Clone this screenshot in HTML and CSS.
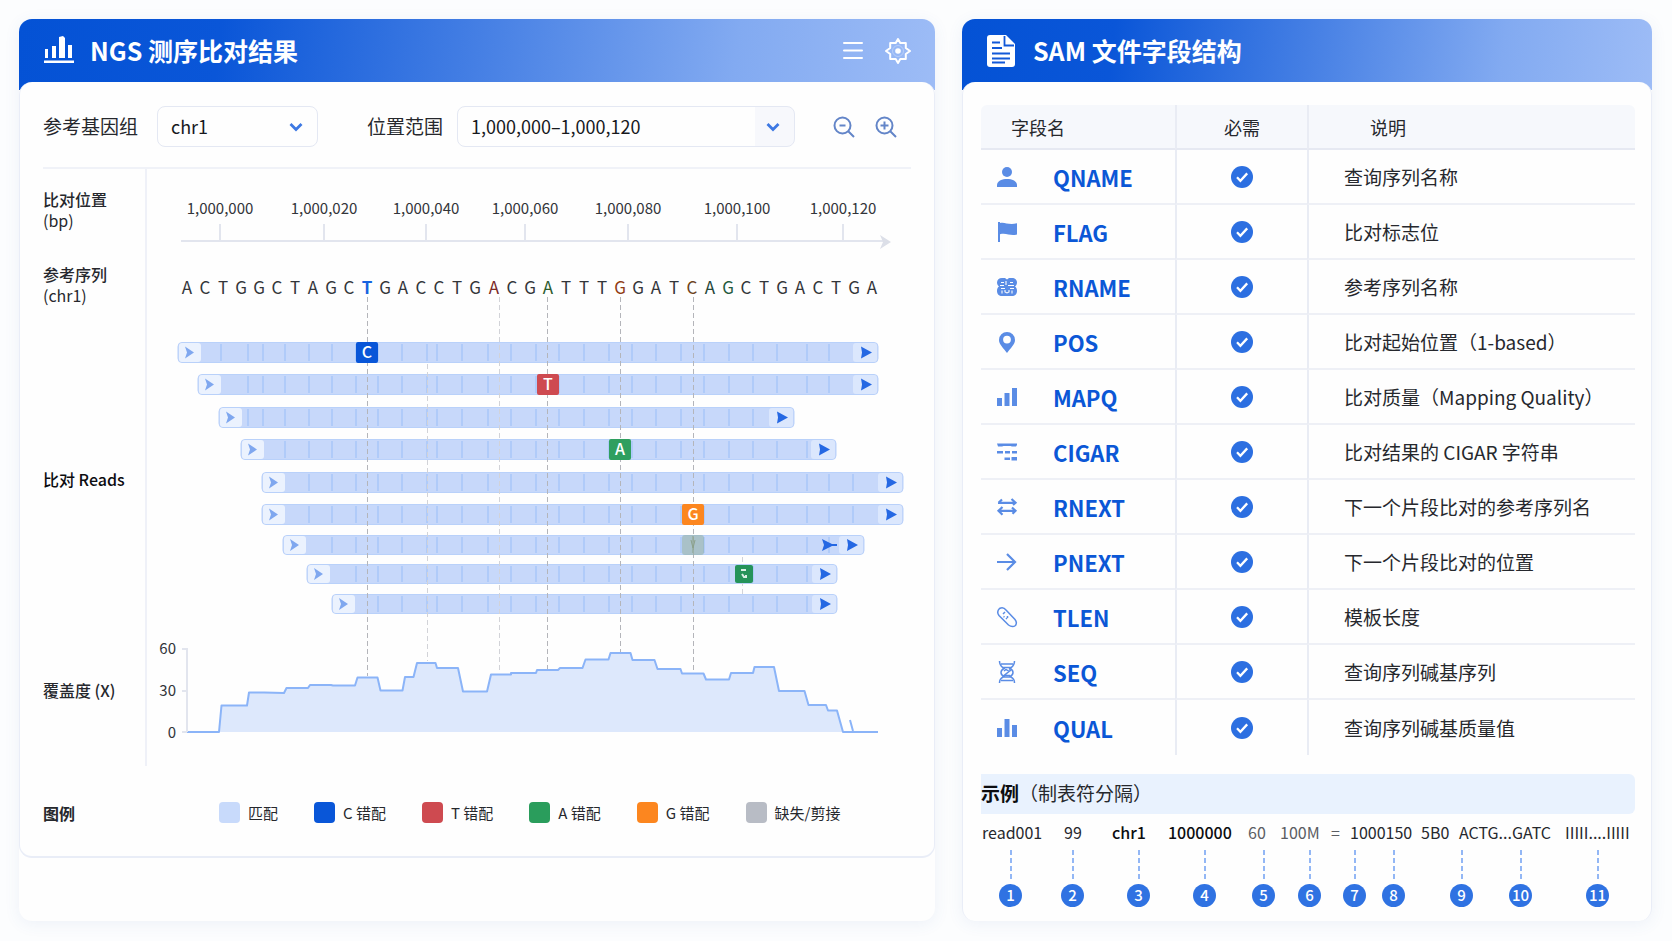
FILE: index.html
```html
<!DOCTYPE html>
<html lang="zh-CN">
<head>
    <meta charset="UTF-8">
    <meta name="viewport" content="width=device-width, initial-scale=1.0">
    <title>NGS 测序比对结果</title>
    <link rel="stylesheet" href="styles.css">
</head>
<body>
    <svg class="sprite" aria-hidden="true">
        <symbol id="check" viewBox="0 0 22 22">
            <circle cx="11" cy="11" r="11" fill="#2c6fe1"/>
            <path d="M6 11.3l3.4 3.5 6.8-7.4" fill="none" stroke="#fff" stroke-width="2.3"/>
        </symbol>
        <symbol id="chevron" viewBox="0 0 14 10">
            <path d="M1.5 2l5.500 5.500L12.500 2" fill="none" stroke="#3d78e3" stroke-width="2.800"/>
        </symbol>
    </svg>

    <main class="page">
        <section class="panel">
            <header class="panel-head">
                <svg class="head-icon" width="30" height="30" viewBox="0 0 30 30" fill="#fff">
                    <path d="M1 13h3v9H1zM8 10h4v12H8zM15 1l4-1 2 2v20h-6zM24 9h4v13h-4zM0 24.500h30v2.500H0z"/>
                </svg>
                <h1>NGS 测序比对结果</h1>
                <div class="head-actions">
                    <button type="button" aria-label="菜单">
                        <svg width="24" height="24" viewBox="0 0 24 24" fill="none" stroke="#fff" stroke-width="2" stroke-linecap="round">
                            <path d="M3 4h18M3 11.500h18M3 19h18"/>
                        </svg>
                    </button>
                    <button type="button" aria-label="设置">
                        <svg width="26" height="26" viewBox="0 0 26 26" fill="none" stroke="#fff" stroke-width="2" stroke-linejoin="round">
                            <path d="M13 1l2.300 4h5.500v5L25 13l-4.200 3v5h-5.500L13 25l-2.300-4H5.200v-5L1 13l4.200-3V5h5.500z"/>
                            <circle cx="13" cy="13" r="5.500" stroke-width="1" stroke-opacity=".3"/>
                            <circle cx="13" cy="13" r="2.800" fill="#fff" stroke="none"/>
                        </svg>
                    </button>
                </div>
            </header>

            <div class="panel-body viewer">
                <form class="controls">
                    <label for="genome">参考基因组</label>
                    <div class="select genome">
                        <select id="genome"><option>chr1</option></select>
                        <svg class="chevron" width="14" height="10"><use href="#chevron"/></svg>
                    </div>
                    <label class="range-label" for="range">位置范围</label>
                    <div class="select range">
                        <select id="range"><option>1,000,000–1,000,120</option></select>
                        <svg class="chevron" width="14" height="10"><use href="#chevron"/></svg>
                    </div>
                    <div class="zoom">
                        <button type="button" aria-label="缩小">
                            <svg width="22" height="22" viewBox="0 0 22 22" fill="none" stroke="#6385c8" stroke-width="2">
                                <circle cx="9.500" cy="9.500" r="8"/><path d="M6.500 9.500h6M15 15l6 6"/>
                            </svg>
                        </button>
                        <button type="button" aria-label="放大">
                            <svg width="22" height="22" viewBox="0 0 22 22" fill="none" stroke="#6385c8" stroke-width="2">
                                <circle cx="9.500" cy="9.500" r="8"/><path d="M5.500 9.500h8M9.500 5.500v8M15 15l6 6"/>
                            </svg>
                        </button>
                    </div>
                </form>

                <div class="tracks">
                    <div class="track-labels">
                        <div>比对位置<span>(bp)</span></div>
                        <div>参考序列<span>(chr1)</span></div>
                        <div class="strong">比对 Reads</div>
                        <div>覆盖度 (X)</div>
                    </div>
                    <svg id="plot" class="plot" viewBox="147 169 764 597" role="img" aria-label="比对 Reads"></svg>
                </div>

                <div class="legend">
                    <h2>图例</h2>
                    <ul>
                        <li><i class="swatch match"></i>匹配</li>
                        <li><i class="swatch base-c"></i>C 错配</li>
                        <li><i class="swatch base-t"></i>T 错配</li>
                        <li><i class="swatch base-a"></i>A 错配</li>
                        <li><i class="swatch base-g"></i>G 错配</li>
                        <li><i class="swatch gap"></i>缺失/剪接</li>
                    </ul>
                </div>
            </div>
        </section>

        <section class="panel">
            <header class="panel-head sam-head">
                <svg class="head-icon" width="28" height="32" viewBox="0 0 28 32">
                    <path d="M3 0h16l9 9v20a3 3 0 0 1-3 3H3a3 3 0 0 1-3-3V3a3 3 0 0 1 3-3z" fill="#fff"/>
                    <path d="M17.500 1v9.500H27M5 7.500h8M5 13h10M5 18.500h18M5 23.500h18M5 27.500h13" fill="none" stroke="#1259d8" stroke-width="1.800"/>
                </svg>
                <h1>SAM 文件字段结构</h1>
            </header>

            <div class="panel-body sam">
                <table class="fields">
                    <thead>
                        <tr><th class="col-name">字段名</th><th class="col-req">必需</th><th class="col-desc">说明</th></tr>
                    </thead>
                    <tbody>
                        <tr>
                            <td><div class="field">
                                <svg viewBox="0 0 20 20"><circle cx="10" cy="5" r="5"/><path d="M0 20v-2.500C1 13.500 5 12 10 12s9 1.500 10 5.500V20z"/></svg>
                                QNAME</div></td>
                            <td><svg class="check" role="img" aria-label="是"><use href="#check"/></svg></td>
                            <td>查询序列名称</td>
                        </tr>
                        <tr>
                            <td><div class="field">
                                <svg viewBox="0 0 20 20"><path d="M1 0h2v1c5-1.500 8 2.500 17 .3v11.200c-7 2-10-2-17-.3V20H1z"/></svg>
                                FLAG</div></td>
                            <td><svg class="check" role="img" aria-label="是"><use href="#check"/></svg></td>
                            <td>比对标志位</td>
                        </tr>
                        <tr>
                            <td><div class="field">
                                <svg viewBox="0 0 20 20"><path d="M5 1h3l2 1.500L12 1h3c3 0 5 2 5 4.500 0 2-1 3-2 4 1.500 1 2 2.500 2 4.500 0 3-2 5-5 5H5c-3 0-5-2-5-5 0-2 .5-3.500 2-4.500-1-1-2-2-2-4C0 3 2 1 5 1z"/><path class="cut" d="M4 5.500h3M9 4v4M13 5.500h3M3 8.500h4M11 8.500h6M4 11.500h4M13 11.500h4M5 13.500v3M8 13v2l2 1 2-1v-2M15 13.500v3"/></svg>
                                RNAME</div></td>
                            <td><svg class="check" role="img" aria-label="是"><use href="#check"/></svg></td>
                            <td>参考序列名称</td>
                        </tr>
                        <tr>
                            <td><div class="field">
                                <svg viewBox="0 0 20 20"><path fill-rule="evenodd" d="M10 0a8 8 0 0 1 8 8c0 4.500-4.500 8-8 13-3.500-5-8-8.500-8-13a8 8 0 0 1 8-8zm0 3.700a3.900 3.900 0 1 0 0 7.800 3.900 3.900 0 0 0 0-7.800z"/></svg>
                                POS</div></td>
                            <td><svg class="check" role="img" aria-label="是"><use href="#check"/></svg></td>
                            <td>比对起始位置（1-based）</td>
                        </tr>
                        <tr>
                            <td><div class="field">
                                <svg viewBox="0 0 20 20"><path d="M0 11h5v8H0zM7.500 6h5v13h-5zM15 1h5v18h-5z"/></svg>
                                MAPQ</div></td>
                            <td><svg class="check" role="img" aria-label="是"><use href="#check"/></svg></td>
                            <td>比对质量（Mapping Quality）</td>
                        </tr>
                        <tr>
                            <td><div class="field">
                                <svg viewBox="0 0 20 20"><path d="M0 1.500h20V3l-1 1.500h-4L13.500 4h-7L5 4.500H1zM0 9h6v2.500H0zM8 9h5v2.500H8zM15 9h5v2.500h-5zM7.500 15.500H13V18H7.500zM14.500 15H20v3.500h-5.500z"/></svg>
                                CIGAR</div></td>
                            <td><svg class="check" role="img" aria-label="是"><use href="#check"/></svg></td>
                            <td>比对结果的 CIGAR 字符串</td>
                        </tr>
                        <tr>
                            <td><div class="field">
                                <svg viewBox="0 0 20 20"><path class="line" d="M1 5.800h18M14.500 2l4 3.800-2.500 2M5 2.500L1.500 5.800M1 13.800h18M5.500 10l-4 3.800 4 4M15 10.500l3.500 3.300-3 3"/></svg>
                                RNEXT</div></td>
                            <td><svg class="check" role="img" aria-label="是"><use href="#check"/></svg></td>
                            <td>下一个片段比对的参考序列名</td>
                        </tr>
                        <tr>
                            <td><div class="field">
                                <svg viewBox="0 0 20 20"><path class="line" d="M0 10h18M10 2l8 8-8 8"/></svg>
                                PNEXT</div></td>
                            <td><svg class="check" role="img" aria-label="是"><use href="#check"/></svg></td>
                            <td>下一个片段比对的位置</td>
                        </tr>
                        <tr>
                            <td><div class="field">
                                <svg viewBox="0 0 20 20"><path class="line thin" d="M2.500 1.500c2.500-1.500 5-.5 6.500 1.500l9 9.500c2 2.500 1.500 4.500.5 6-2 1.500-5 1-7-.5L2 8.500C.5 6.500.5 3.500 2.500 1.500zM6 7l2-2M9 12l1-1"/><path class="line thin" d="M6.500 9.500l1 .5M10.500 9v2"/></svg>
                                TLEN</div></td>
                            <td><svg class="check" role="img" aria-label="是"><use href="#check"/></svg></td>
                            <td>模板长度</td>
                        </tr>
                        <tr>
                            <td><div class="field">
                                <svg viewBox="0 0 20 20"><path class="line thin" d="M2.500-1c0 5 2 5.500 4.500 7.500-4 2-4 6 0 8-2.500 1.500-4.500 2-4.500 6.500M17.500-1c0 5-2 5.500-4.500 7.500 4 2 4 6 0 8 2.500 1.500 4.500 2 4.500 6.500M4 2h12M6 5.500h8M6 15h8M4 18.500h12"/><path class="line thin" d="M7 9l2-1.500 3 2-5 4h6M12 7.500l2 1.500"/></svg>
                                SEQ</div></td>
                            <td><svg class="check" role="img" aria-label="是"><use href="#check"/></svg></td>
                            <td>查询序列碱基序列</td>
                        </tr>
                        <tr>
                            <td><div class="field">
                                <svg viewBox="0 0 20 20"><path d="M0 10h5v9H0zM7.500 1h5v18h-5zM15 7h5v12h-5z"/></svg>
                                QUAL</div></td>
                            <td><svg class="check" role="img" aria-label="是"><use href="#check"/></svg></td>
                            <td>查询序列碱基质量值</td>
                        </tr>
                    </tbody>
                </table>

                <h2 class="example-title"><b>示例</b>（制表符分隔）</h2>
                <div class="example-line">
                    <span>read001</span>
                    <span>99</span>
                    <span class="dark">chr1</span>
                    <span class="dark">1000000</span>
                    <span class="pale">60</span>
                    <span class="pale">100M</span>
                    <span class="pale">=</span>
                    <span>1000150</span>
                    <span>5B0</span>
                    <span>ACTG...GATC</span>
                    <span>IIIII....IIIII</span>
                </div>
                <ol class="markers">
                    <li>1</li><li>2</li><li>3</li><li>4</li><li>5</li><li>6</li>
                    <li>7</li><li>8</li><li>9</li><li>10</li><li>11</li>
                </ol>
            </div>
        </section>
    </main>

    <script src="plot.js"></script>
</body>
</html>
```

FILE: styles.css
```css
* {
    box-sizing: border-box;
}
body {
    margin: 0;
    background-color: #fcfdfe;
    color: #26282d;
    font-family: "Noto Sans CJK SC", "Noto Sans", sans-serif;
    font-size: 16px;
}
h1, h2, ul, ol {
    margin: 0;
    padding: 0;
    font-weight: 400;
}
ul, ol {
    list-style: none;
}
button {
    display: flex;
    padding: 0;
    border: none;
    background: none;
    cursor: pointer;
}
.sprite {
    display: none;
}
.page {
    display: grid;
    grid-template-columns: 916fr 690fr;
    gap: 27px;
    padding: 19px 20px 20px 19px;
}

/* panels */
.panel {
    border-radius: 13px;
    background: #fefefe linear-gradient(97deg, #0452d5 0%, #0a56d8 22%, #457fe4 50%, #82aaf1 78%, #9dbcf6 100%) no-repeat;
    background-size: 100% 71px;
    box-shadow: 0 3px 16px rgba(70, 100, 180, 0.08);
}
.panel-head {
    display: flex;
    align-items: center;
    gap: 16px;
    height: 63px;
    padding: 0 24px 0 25px;
    color: #fff;
}
.sam-head {
    gap: 18px;
}
.panel-head h1 {
    padding-bottom: 2px;
    font-size: 25px;
    line-height: 32px;
    font-weight: 700;
}
.head-actions {
    display: flex;
    align-items: center;
    gap: 20px;
    margin-left: auto;
}
.panel-body {
    border: 1px solid #e9edf7;
    border-top: none;
    border-radius: 13px;
    background-color: #fefefe;
}
.viewer {
    padding: 24px 23px 0;
    border-bottom: 2px solid #e9edf7;
}
.sam {
    padding: 23px 16px 14px 18px;
    border-bottom: none;
}

/* controls */
.controls {
    display: flex;
    align-items: center;
    padding-bottom: 20px;
    border-bottom: 2px solid #f0f2f8;
    font-size: 19px;
    line-height: 26px;
    white-space: nowrap;
}
.controls label {
    padding-bottom: 2px;
}
.range-label {
    margin-left: 49px;
}
.select {
    position: relative;
    height: 41px;
}
.genome {
    width: 161px;
    margin-left: 19px;
}
.range {
    flex: 1;
    margin-left: 14px;
}
.select select {
    width: 100%;
    height: 100%;
    padding: 0 13px 1px;
    border: 1px solid #e4e8f3;
    border-radius: 8px;
    background-color: #fefefe;
    color: #17191d;
    font-family: inherit;
    font-size: 18px;
    appearance: none;
}
.range select {
    background: linear-gradient(#f7f8fc, #f7f8fc) right / 39px 100% no-repeat #fefefe;
}
.chevron {
    position: absolute;
    top: 16px;
    right: 15px;
    pointer-events: none;
}
.zoom {
    display: flex;
    gap: 20px;
    margin: 0 14px 0 38px;
}

/* tracks */
.tracks {
    display: grid;
    grid-template-columns: 104fr 764fr;
}
.track-labels {
    display: grid;
    grid-template-rows: 82fr 68fr 320fr 102fr 25fr;
    align-items: center;
    border-right: 2px solid #eff1f8;
    font-weight: 500;
    line-height: 21px;
    white-space: nowrap;
}
.track-labels span {
    display: block;
    font-weight: 400;
}
.track-labels .strong {
    color: #0c0d10;
}
.plot {
    display: block;
    width: 100%;
    font-size: 15px;
    fill: #33353a;
}
.plot .axis {
    fill: none;
    stroke: #e2e5ee;
    stroke-width: 2;
}
.plot .arrow {
    fill: #dcdfe8;
}
.plot .mid {
    text-anchor: middle;
}
.plot .end {
    text-anchor: end;
}
.plot .sequence {
    font-size: 17px;
    text-anchor: middle;
}
.plot .bar {
    fill: #c7d8fa;
    stroke: #b9d1fa;
}
.plot .cap-start {
    fill: #ebf2fe;
}
.plot .cap-end {
    fill: #dbe7fd;
}
.plot .cells {
    fill: none;
    stroke: #b0cbf9;
    stroke-width: 2;
}
.plot .head-start {
    fill: #7fa7ef;
}
.plot .head-end {
    fill: #2568e3;
}
.plot .guide {
    stroke: #b4b5ba;
    stroke-dasharray: 5 3;
}
.plot .guide.light {
    stroke: #d2d3d8;
}
.plot .badge-text {
    fill: #fff;
    font-size: 16px;
    font-weight: 500;
    text-anchor: middle;
}
.plot .area {
    fill: #dde8fc;
}
.plot .area-line {
    fill: none;
    stroke: #8bb4f8;
    stroke-width: 2;
    stroke-linejoin: round;
}

/* legend */
.legend {
    display: flex;
    align-items: center;
    height: 87px;
    margin-top: 3px;
}
.legend h2 {
    width: 176px;
    font-size: 16px;
    font-weight: 700;
}
.legend ul {
    display: flex;
    gap: 36px;
    font-size: 15px;
}
.legend li {
    display: flex;
    align-items: center;
    gap: 8px;
    white-space: nowrap;
}
.swatch {
    width: 21px;
    height: 21px;
    border-radius: 4px;
}
.match { background-color: #c8dafb; }
.base-c { background-color: #0956d8; }
.base-t { background-color: #ce4a50; }
.base-a { background-color: #2a9d5c; }
.base-g { background-color: #fc861f; }
.gap { background-color: #b8bcc5; }

/* field table */
.fields {
    width: 100%;
    border-spacing: 0;
    table-layout: fixed;
    font-size: 19px;
    text-align: left;
}
.fields th {
    height: 45px;
    padding: 0;
    border-bottom: 2px solid #e6e9f2;
    background-color: #f6f8fc;
    font-size: 18px;
    font-weight: 400;
}
.fields td {
    height: 55px;
    padding: 0;
    border-bottom: 2px solid #eef0f6;
}
.fields tr:last-child td {
    border-bottom: none;
}
.fields th + th, .fields td + td {
    border-left: 2px solid #e9ecf4;
}
.fields .col-name {
    width: 194px;
    padding-left: 30px;
    border-top-left-radius: 6px;
}
.fields .col-req {
    width: 132px;
}
.fields .col-desc {
    padding-left: 61px;
    border-top-right-radius: 6px;
}
.fields th:nth-child(2), .fields td:nth-child(2) {
    text-align: center;
}
.fields td:nth-child(3) {
    padding-left: 35px;
    white-space: nowrap;
}
.field {
    display: flex;
    align-items: center;
    gap: 36px;
    padding-left: 16px;
    color: #0b57d6;
    font-size: 22px;
    font-weight: 700;
}
.field svg {
    width: 20px;
    height: 20px;
    overflow: visible;
    fill: #5a8ce5;
}
.field .line {
    fill: none;
    stroke: #5a8ce5;
    stroke-width: 2.2;
}
.field .thin {
    stroke-width: 1.5;
}
.field .cut {
    fill: none;
    stroke: #fefefe;
    stroke-width: 1.1;
}
.check {
    display: block;
    width: 22px;
    height: 22px;
    margin: 0 auto;
}

/* example record */
.example-title {
    height: 40px;
    margin-top: 19px;
    border-radius: 0 6px 6px 0;
    background-color: #e9f2fe;
    font-size: 19px;
    line-height: 38px;
}
.example-title b {
    color: #0c0d10;
}
.example-line {
    display: grid;
    grid-template-columns: 82fr 48fr 56fr 80fr 32fr 51fr 19fr 71fr 38fr 106fr 70fr;
    padding-left: 1px;
    font-size: 16px;
    line-height: 36px;
    white-space: nowrap;
}
.example-line span {
    min-width: 0;
}
.dark {
    color: #0c0d10;
    font-weight: 500;
}
.pale {
    color: #5b5d63;
}
.markers {
    display: grid;
    grid-template-columns: 62fr 66fr 66fr 59fr 46fr 45fr 39fr 68fr 59fr 77fr 49fr;
    padding-left: 18px;
}
.markers li {
    width: 23px;
    height: 23px;
    margin-top: 34px;
    border-radius: 50%;
    background-color: #2f72e2;
    color: #fff;
    font-size: 15px;
    font-weight: 500;
    line-height: 22px;
    text-align: center;
}
.markers li::before {
    content: "";
    display: block;
    width: 2px;
    height: 29px;
    margin: -34px auto 5px;
    background: repeating-linear-gradient(#93b7f5 0 5px, transparent 5px 8px);
}
```

FILE: plot.js
```js
const plot = document.getElementById('plot');

function add(tag, attrs, text) {
    const el = document.createElementNS('http://www.w3.org/2000/svg', tag);
    for (const key in attrs) el.setAttribute(key, attrs[key]);
    if (text !== undefined) el.textContent = text;
    plot.appendChild(el);
    return el;
}

// position axis
const ticks = [[220, '1,000,000'], [324, '1,000,020'], [426, '1,000,040'], [525, '1,000,060'],
    [628, '1,000,080'], [737, '1,000,100'], [843, '1,000,120']];
ticks.forEach(([x, label]) => {
    add('text', { x: x, y: 214, class: 'mid' }, label);
    add('path', { d: `M${x} 224V242`, class: 'axis' });
});
add('path', { d: 'M181 241H883', class: 'axis' });
add('path', { d: 'M880 235L891 242L880 249L883 242Z', class: 'arrow' });

// reference sequence, one letter per column
const sequence = 'ACTGGCTAGCTGACCTGACGATTTGGATCAGCTGACTGA';
const baseColors = { 10: '#1763e0', 17: '#7a2a28', 20: '#2c5a2c', 24: '#8f3b14', 28: '#6b4120', 29: '#25463a', 30: '#1f5a40' };
[...sequence].forEach((base, i) => {
    const letter = add('text', { x: Math.round(187 + i * 18.03), y: 294, class: 'sequence' }, base);
    if (baseColors[i]) letter.style.fill = baseColors[i];
    if (i === 10) letter.style.fontWeight = 700;
});

// coverage
const coverage = 'M187 732H219L221.500 705.500H247L249 692.500H264L284 693L286.500 688H308L310 685H331L333 685.500H355' +
    'L357.500 677.500H377.500L380.500 690.500H402.500L405 677H413.500L417 663H435.500L437 668H458L463 691.500H487' +
    'L491 674.500H511V673H536L537 670H558L560 668H582.500L585.500 659.500H608.500L610.500 653H630.500L632.500 660H654.500' +
    'L657.500 669H680.500L682 673.500H703.500L706 679.500H729L731 673H753L754.500 667H774L779 691H804.500L808.500 705' +
    'H826L828 710.500H837L843 732';
add('path', { d: coverage + 'Z', class: 'area' });
add('path', { d: coverage + 'H878M850 720L853 731', class: 'area-line' });
add('path', { d: 'M182 649H187V732M182 691H187M182 732H187', class: 'axis' });
[[60, 654], [30, 696], [0, 738]].forEach(([value, y]) => {
    add('text', { x: 176, y: y, class: 'end' }, value);
});

// reads: start, end, top, height
const reads = [
    [178, 878, 342, 21], [198, 878, 374, 21], [219, 794, 407, 21],
    [241, 836, 439, 21], [262, 903, 472, 21], [262, 903, 504, 21],
    [283, 864, 535, 20], [307, 837, 564, 20], [332, 837, 594, 20]
];
const cells = [221, 248, 263, 285, 309, 332, 356, 378, 402, 427, 437, 462, 488, 511, 536, 559, 584, 609,
    632, 656, 681, 704, 729, 753, 777, 807, 829, 853];

reads.forEach(([x1, x2, y, h], i) => {
    const mid = y + h / 2;
    add('rect', { x: x1, y: y + .5, width: x2 - x1, height: h - 1, rx: 4, class: 'bar' });
    add('rect', { x: x1 + 1, y: y + 1, width: 22, height: h - 2, rx: 3, class: 'cap-start' });
    add('rect', { x: x2 - 25, y: y + 1, width: 24, height: h - 2, rx: 3, class: 'cap-end' });
    const d = cells.filter(x => x > x1 + 26 && x < x2 - 26).map(x => `M${x} ${y + 2}v${h - 4}`).join('');
    add('path', { d: d, class: 'cells' });
    add('path', { d: `M${x1 + 7} ${mid - 6}l9 6l-9 6l2 -6Z`, class: 'head-start' });
    add('path', { d: `M${x2 - 17} ${mid - 6}l11 6l-11 6l1 -6Z`, class: 'head-end' });
    if (i === 6) add('path', { d: `M${x2 - 42} ${mid - 6}l10 5h5v2h-5l-10 5l2 -6Z`, class: 'head-end' });
});

// guides through mismatched positions
[[367, 297, 676], [427, 364, 661, 'light'], [499, 297, 672, 'light'], [547, 297, 669], [620, 297, 652],
    [693, 297, 671], [742, 557, 594, 'light']].forEach(([x, y1, y2, tone]) => {
    add('path', { d: `M${x + .5} ${y1}V${y2}`, class: 'guide ' + (tone || '') });
});

// mismatches
[[356, 342, '#0956d8', 'C'], [537, 374, '#ce4a50', 'T'], [609, 439, '#2f9f5f', 'A'], [682, 504, '#fc861f', 'G']]
    .forEach(([x, y, color, base]) => {
        add('rect', { x: x, y: y, width: 22, height: 21, rx: 2, fill: color });
        add('text', { x: x + 11, y: y + 16, class: 'badge-text' }, base);
    });
add('rect', { x: 682, y: 535, width: 22, height: 20, rx: 3, fill: '#8fae9f', 'fill-opacity': .55 });
add('path', { d: 'M691 540L693 548L695 540M693 536V553', fill: 'none', stroke: '#8ba08a' });
add('rect', { x: 735, y: 565, width: 18, height: 18, rx: 2, fill: '#259359' });
add('path', { d: 'M741 570h5M742 574l2 3h2v-2', fill: 'none', stroke: '#d9efe4', 'stroke-width': 2 });
```
